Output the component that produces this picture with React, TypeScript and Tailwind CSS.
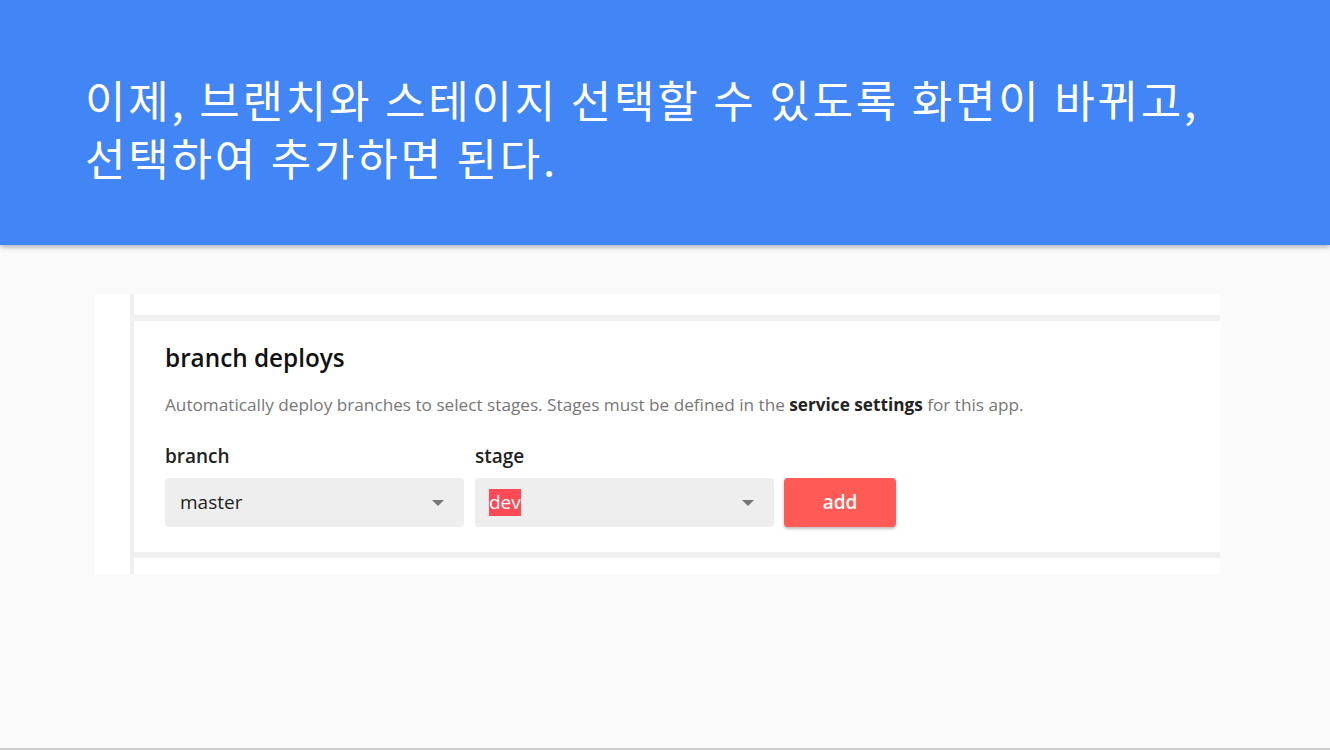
import React from "react";

export default function App() {
  return (
    <div className="w-[1330px] h-[750px] bg-[#fafafa] flex flex-col overflow-hidden relative">
      <div className="h-[245px] bg-[#4285f4] shrink-0 px-[85px] pt-[70px] relative z-10 shadow-[0_2px_5px_rgba(0,0,0,0.3)]">
        <div
          className="text-white text-[44px] leading-[58px] font-normal tracking-[2.8px]"
          style={{ fontFamily: '"Noto Sans CJK KR", "Noto Sans", sans-serif' }}
        >
          이제, 브랜치와 스테이지 선택할 수 있도록 화면이 바뀌고,
          <br />
          선택하여 추가하면 된다.
        </div>
      </div>
      <div className="flex-1 pt-[49px] pl-[95px]">
        <div
          className="w-[1125px] h-[280px] bg-white flex"
          style={{ fontFamily: '"Open Sans", Lato, sans-serif' }}
        >
          <div className="w-[35px] shrink-0" />
          <div className="w-[4px] bg-[#efefef] shrink-0" />
          <div className="flex-1 flex flex-col">
            <div className="h-[21px]" />
            <div className="h-[6px] bg-[#f0f0f0]" />
            <div className="flex-1 pl-[31px] pt-[20px]">
              <div className="text-[24.3px] leading-[34px] font-semibold text-[#111]">branch deploys</div>
              <div className="mt-[19px] text-[17.2px] leading-[22px] text-[#777]">
                Automatically deploy branches to select stages. Stages must be defined in the{" "}
                <span className="font-bold text-[#222]">service settings</span> for this app.
              </div>
              <div className="mt-[27px] flex items-end gap-[11px]">
                <div className="flex flex-col">
                  <div className="text-[19px] leading-[26px] font-semibold text-[#222] mb-[9px]">branch</div>
                  <div className="w-[299px] h-[49px] bg-[#eeeeee] rounded-[4px] flex items-center pl-[15px] pr-[20px]">
                    <span className="text-[19px] text-[#222] flex-1">master</span>
                    <svg width="12" height="6" viewBox="0 0 12 6"><path d="M0 0 L12 0 L6 6 Z" fill="#777" /></svg>
                  </div>
                </div>
                <div className="flex flex-col">
                  <div className="text-[19px] leading-[26px] font-semibold text-[#222] mb-[9px]">stage</div>
                  <div className="w-[299px] h-[49px] bg-[#eeeeee] rounded-[4px] flex items-center pl-[14px] pr-[20px]">
                    <span className="flex-1">
                      <span className="text-[19px] leading-[27px] bg-[#ff4a55] text-white inline-block">dev</span>
                    </span>
                    <svg width="12" height="6" viewBox="0 0 12 6"><path d="M0 0 L12 0 L6 6 Z" fill="#777" /></svg>
                  </div>
                </div>
                <div className="w-[112px] h-[49px] bg-[#ff5a55] rounded-[4px] flex items-center justify-center text-white text-[19px] font-semibold shadow-[0_2px_3px_rgba(0,0,0,0.25)] -ml-[1px]">
                  add
                </div>
              </div>
            </div>
            <div className="h-[6px] bg-[#f0f0f0]" />
            <div className="h-[16px]" />
          </div>
        </div>
      </div>
      <div className="h-[2px] bg-[#cccccc] shrink-0" />
    </div>
  );
}
